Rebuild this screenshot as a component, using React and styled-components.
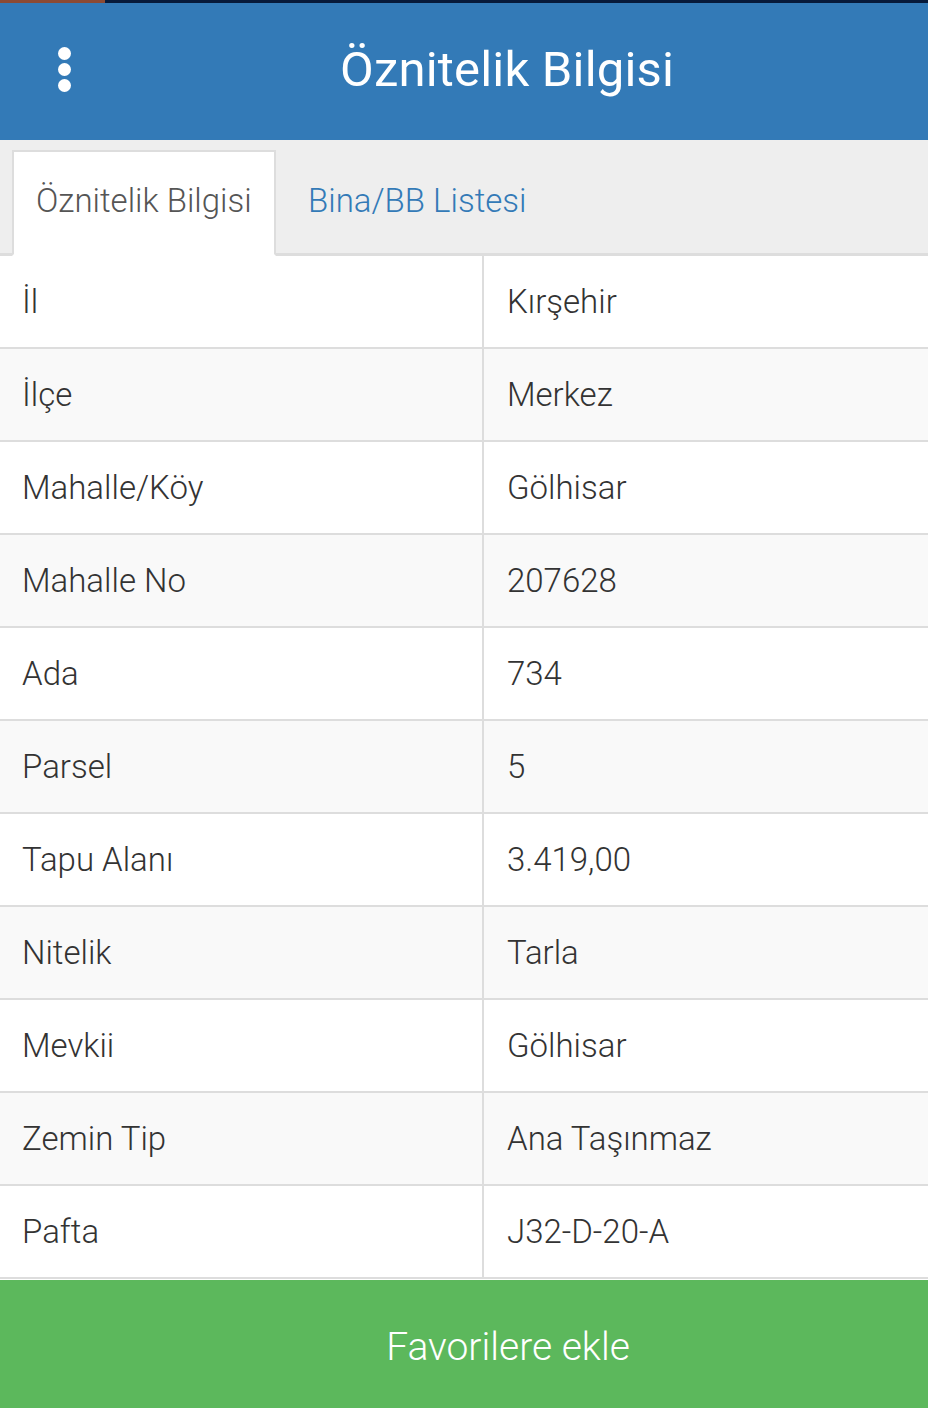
import React from "react";
import styled, { createGlobalStyle } from "styled-components";

const GlobalStyle = createGlobalStyle`
  html, body {
    margin: 0;
    padding: 0;
    background: #ffffff;
  }
  body {
    font-family: Roboto, "Noto Sans", "Liberation Sans", sans-serif;
  }
  * {
    box-sizing: border-box;
  }
`;

const Screen = styled.div`
  width: 928px;
  height: 1408px;
  display: flex;
  flex-direction: column;
  overflow: hidden;
`;

const StatusStrip = styled.div`
  display: flex;
  height: 3px;
  background: #071a3a;
`;

const StatusProgress = styled.div`
  width: 105px;
  background: #8c4a33;
`;

const Header = styled.div`
  height: 137px;
  background: #337ab7;
  display: flex;
  align-items: center;
  padding-bottom: 4px;
`;

const MenuButton = styled.div`
  width: 128px;
  height: 100%;
  display: flex;
  flex-direction: column;
  align-items: center;
  justify-content: center;
  gap: 3px;
`;

const Dot = styled.span`
  width: 13px;
  height: 13px;
  border-radius: 50%;
  background: #ffffff;
`;

const HeaderTitle = styled.h1`
  flex: 1;
  margin: 0;
  padding-left: 212px;
  color: #ffffff;
  font-size: 49px;
  font-weight: 400;
  letter-spacing: 0.2px;
`;

const TabBar = styled.div`
  display: flex;
  align-items: flex-end;
  height: 116px;
  padding: 9px 0 0 12px;
  background: #eeeeee;
  border-bottom: 3px solid #dddddd;
`;

const Tab = styled.div`
  height: 106px;
  margin-bottom: -3px;
  display: flex;
  align-items: center;
  padding: 0 ${(p) => (p.$active ? "22px" : "30px")} 6px;
  font-size: 33px;
  font-weight: 300;
  white-space: nowrap;
  color: ${(p) => (p.$active ? "#555555" : "#337ab7")};
  background: ${(p) => (p.$active ? "#ffffff" : "transparent")};
  border: 2px solid ${(p) => (p.$active ? "#dddddd" : "transparent")};
  border-bottom-color: ${(p) => (p.$active ? "#ffffff" : "transparent")};
  width: ${(p) => (p.$active ? "264px" : "auto")};
`;

const Table = styled.div`
  display: flex;
  flex-direction: column;
`;

const Row = styled.div`
  display: grid;
  grid-template-columns: 482px 1fr;
  height: 93px;
  border-bottom: 2px solid #dddddd;
  background: ${(p) => (p.$striped ? "#f9f9f9" : "#ffffff")};
`;

const Cell = styled.div`
  display: flex;
  align-items: center;
  padding: 0 0 1px ${(p) => (p.$value ? "23px" : "22px")};
  font-size: 33px;
  font-weight: 300;
  color: #333333;
  border-left: ${(p) => (p.$value ? "2px solid #dddddd" : "none")};
`;

const FavButton = styled.button`
  flex: 1;
  border: none;
  margin-top: 1px;
  background: #5cb85c;
  color: #ffffff;
  font-family: inherit;
  font-size: 39px;
  font-weight: 300;
  padding: 6px 0 0 88px;
`;

const rows = [
  ["İl", "Kırşehir"],
  ["İlçe", "Merkez"],
  ["Mahalle/Köy", "Gölhisar"],
  ["Mahalle No", "207628"],
  ["Ada", "734"],
  ["Parsel", "5"],
  ["Tapu Alanı", "3.419,00"],
  ["Nitelik", "Tarla"],
  ["Mevkii", "Gölhisar"],
  ["Zemin Tip", "Ana Taşınmaz"],
  ["Pafta", "J32-D-20-A"],
];

export default function App() {
  return (
    <Screen>
      <GlobalStyle />
      <StatusStrip>
        <StatusProgress />
      </StatusStrip>
      <Header>
        <MenuButton>
          <Dot />
          <Dot />
          <Dot />
        </MenuButton>
        <HeaderTitle>Öznitelik Bilgisi</HeaderTitle>
      </Header>
      <TabBar>
        <Tab $active>Öznitelik Bilgisi</Tab>
        <Tab>Bina/BB Listesi</Tab>
      </TabBar>
      <Table>
        {rows.map(([label, value], i) => (
          <Row key={label} $striped={i % 2 === 1}>
            <Cell>{label}</Cell>
            <Cell $value>{value}</Cell>
          </Row>
        ))}
      </Table>
      <FavButton>Favorilere ekle</FavButton>
    </Screen>
  );
}
